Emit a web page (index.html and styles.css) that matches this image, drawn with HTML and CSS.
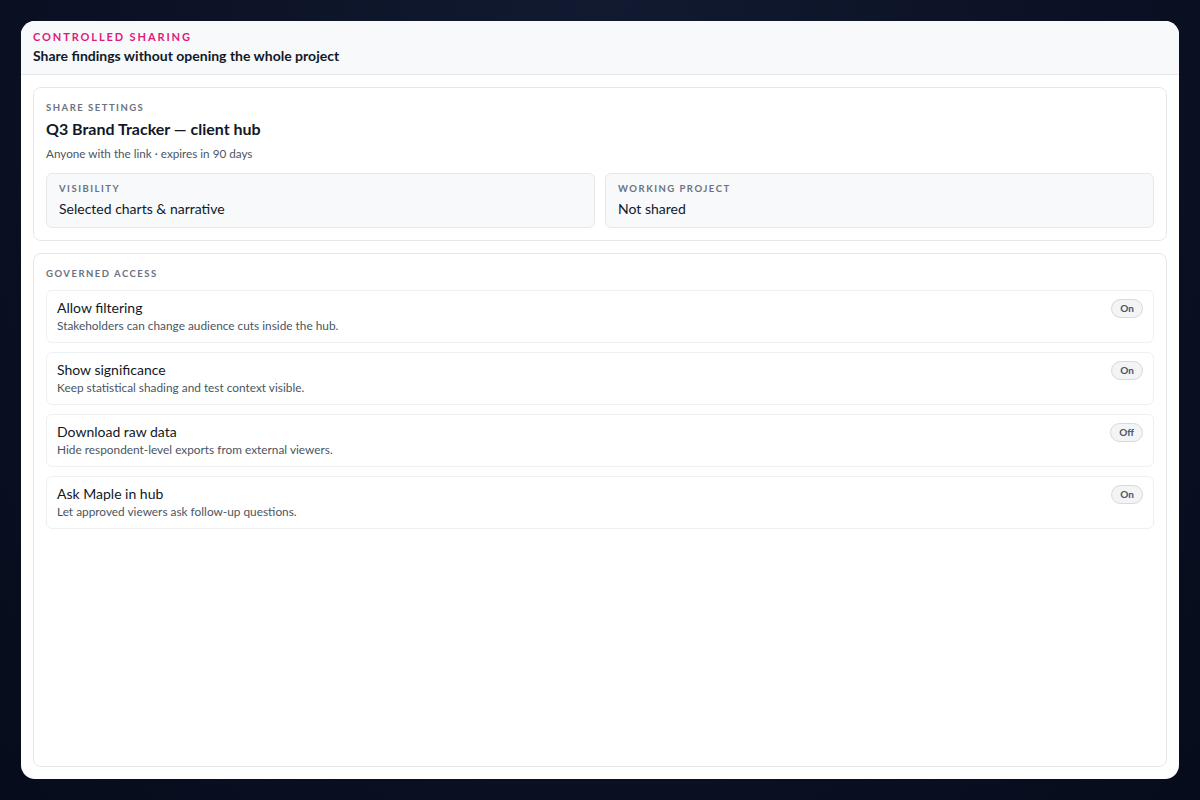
FILE: index.html
```html
<!DOCTYPE html>
<html>
<head>
<meta charset="utf-8">
<link rel="stylesheet" href="styles.css">
</head>
<body>
<div class="panel">
  <header class="head">
    <div class="eyebrow">CONTROLLED SHARING</div>
    <div class="head-title">Share findings without opening the whole project</div>
  </header>
  <main class="body">
    <section class="card">
      <div class="label">SHARE SETTINGS</div>
      <div class="card-title">Q3 Brand Tracker — client hub</div>
      <div class="card-sub">Anyone with the link · expires in 90 days</div>
      <div class="grid">
        <div class="tile">
          <div class="label">VISIBILITY</div>
          <div class="tile-value">Selected charts &amp; narrative</div>
        </div>
        <div class="tile">
          <div class="label">WORKING PROJECT</div>
          <div class="tile-value">Not shared</div>
        </div>
      </div>
    </section>
    <section class="card card-grow">
      <div class="label">GOVERNED ACCESS</div>
      <div class="rows">
        <div class="row">
          <div class="row-text">
            <div class="row-title">Allow filtering</div>
            <div class="row-desc">Stakeholders can change audience cuts inside the hub.</div>
          </div>
          <span class="pill">On</span>
        </div>
        <div class="row">
          <div class="row-text">
            <div class="row-title">Show significance</div>
            <div class="row-desc">Keep statistical shading and test context visible.</div>
          </div>
          <span class="pill">On</span>
        </div>
        <div class="row">
          <div class="row-text">
            <div class="row-title">Download raw data</div>
            <div class="row-desc">Hide respondent-level exports from external viewers.</div>
          </div>
          <span class="pill">Off</span>
        </div>
        <div class="row">
          <div class="row-text">
            <div class="row-title">Ask Maple in hub</div>
            <div class="row-desc">Let approved viewers ask follow-up questions.</div>
          </div>
          <span class="pill">On</span>
        </div>
      </div>
    </section>
  </main>
</div>
</body>
</html>
```
FILE: styles.css
```css
* { box-sizing: border-box; }
html, body { height: 100%; }
body {
  margin: 0;
  padding: 21px;
  background: #0b1124;
  background-image: radial-gradient(ellipse at 50% 0%, #111a30 0%, #0b1124 60%, #070c1c 100%);
  font-family: Lato, "Noto Sans", sans-serif;
  color: #111827;
}
.panel {
  height: 758px;
  background: #ffffff;
  border-radius: 14px;
  overflow: hidden;
  display: flex;
  flex-direction: column;
}
.head {
  background: #f8f9fb;
  border-bottom: 1px solid #e5e7eb;
  padding: 9px 12px 9px;
}
.eyebrow {
  font-size: 11px;
  font-weight: 700;
  letter-spacing: 1.9px;
  color: #e0197d;
  line-height: 14px;
}
.head-title {
  font-size: 14px;
  font-weight: 700;
  color: #111827;
  line-height: 18px;
  margin-top: 3px;
}
.body {
  flex: 1;
  padding: 12px;
  display: flex;
  flex-direction: column;
  gap: 12px;
  min-height: 0;
}
.card {
  border: 1px solid #e5e7eb;
  border-radius: 8px;
  padding: 13px 12px 12px;
}
.card-grow { flex: 1; }
.label {
  font-size: 9.5px;
  font-weight: 700;
  letter-spacing: 1.5px;
  color: #6b7280;
  line-height: 14px;
}
.card-title {
  font-size: 16px;
  font-weight: 700;
  color: #111827;
  line-height: 20px;
  margin-top: 4px;
}
.card-sub {
  font-size: 11.7px;
  color: #4b5563;
  line-height: 16px;
  margin-top: 6px;
}
.grid {
  display: grid;
  grid-template-columns: 1fr 1fr;
  gap: 10px;
  margin-top: 12px;
}
.tile {
  background: #f8f9fb;
  border: 1px solid #e5e7eb;
  border-radius: 6px;
  padding: 8px 12px 9px;
}
.tile-value {
  font-size: 14px;
  color: #111827;
  line-height: 18px;
  margin-top: 4px;
}
.rows {
  display: flex;
  flex-direction: column;
  gap: 9px;
  margin-top: 9px;
}
.row {
  border: 1px solid #eef0f3;
  border-radius: 6px;
  padding: 8px 10px 8px;
  display: flex;
  justify-content: space-between;
  align-items: flex-start;
  height: 53px;
}
.row-title {
  font-size: 14px;
  color: #111827;
  line-height: 18px;
}
.row-desc {
  font-size: 11.85px;
  color: #4b5563;
  line-height: 16px;
  margin-top: 1px;
}
.pill {
  font-size: 10px;
  font-weight: 700;
  color: #4b5563;
  background: #f3f4f6;
  border: 1px solid #d6d9de;
  border-radius: 999px;
  padding: 2px 8px;
  line-height: 13px;
}
```
